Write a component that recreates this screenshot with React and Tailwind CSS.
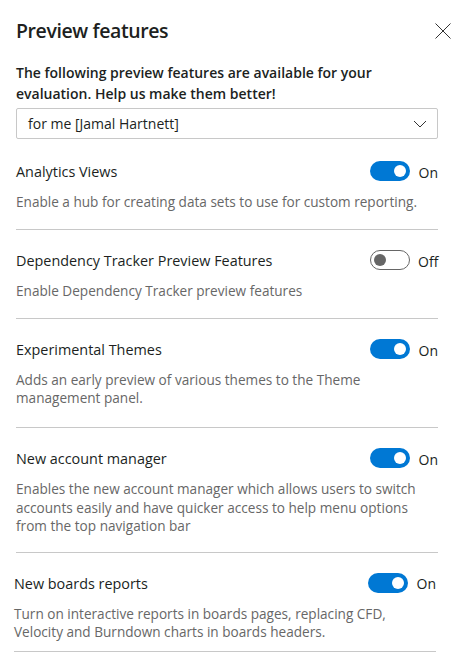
import React from "react";

const features = [
  { title: "Analytics Views", desc: "Enable a hub for creating data sets to use for custom reporting.", on: true, pb: "pb-[18px]", lh: "leading-[18px]" },
  { title: "Dependency Tracker Preview Features", desc: "Enable Dependency Tracker preview features", on: false, pb: "pb-[18px]", lh: "leading-[18px]" },
  { title: "Experimental Themes", desc: "Adds an early preview of various themes to the Theme management panel.", on: true, pb: "pb-[20px]", lh: "leading-[18px]" },
  { title: "New account manager", desc: "Enables the new account manager which allows users to switch accounts easily and have quicker access to help menu options from the top navigation bar", on: true, pb: "pb-[16px]", lh: "leading-[18.5px]" },
];

function Toggle({ on }) {
  return (
    <div className="flex items-center gap-[8px]">
      {on ? (
        <div className="w-[40px] h-[20px] rounded-full bg-[#0078d4] flex items-center justify-end px-[4px] -mt-[2px]">
          <div className="w-[12px] h-[12px] rounded-full bg-white" />
        </div>
      ) : (
        <div className="w-[40px] h-[20px] rounded-full border border-[#666] flex items-center justify-start px-[3px] -mt-[2px]">
          <div className="w-[12px] h-[12px] rounded-full bg-[#666]" />
        </div>
      )}
      <span className="text-[14px] text-[#201f1e] w-[20px] text-right">{on ? "On" : "Off"}</span>
    </div>
  );
}

function Feature({ f, shift }) {
  return (
    <div className={`border-b border-[#c8c8c8] pt-[21px] ${f.pb} ${shift ? "-ml-[2px] mr-[2px]" : ""}`}>
      <div className="flex items-center justify-between h-[20px]">
        <span className="text-[14.4px] text-[#201f1e]">{f.title}</span>
        <Toggle on={f.on} />
      </div>
      <p className={`mt-[11px] text-[13.6px] ${f.lh} text-[#676767] pr-[14px]`}>{f.desc}</p>
    </div>
  );
}

export default function App() {
  return (
    <div className="w-[458px] h-[657px] bg-white overflow-hidden" style={{ fontFamily: '"Segoe UI", "Open Sans", "Noto Sans", sans-serif' }}>
      <div className="px-[16px]">
        <div className="flex items-center justify-between pt-[16px] h-[46px]">
          <h1 className="text-[19.5px] tracking-[-0.4px] font-semibold text-[#201f1e] leading-[28px]">Preview features</h1>
          <svg width="16" height="16" viewBox="0 0 16 16" className="mr-[-9px] mt-[-1px]">
            <path d="M0.5 0.5 L15.5 15.5 M15.5 0.5 L0.5 15.5" stroke="#333" strokeWidth="1" fill="none" />
          </svg>
        </div>
        <div className="mr-[4px]">
          <p className="mt-[16px] text-[14px] leading-[21px] font-semibold text-[#201f1e] pr-[40px]">
            The following preview features are available for your evaluation. Help us make them better!
          </p>
          <div className="mt-[4px] h-[31px] border border-[#c8c8c8] rounded-[2px] flex items-center justify-between pl-[11px] pr-[10px]">
            <span className="text-[14px] text-[#201f1e]">for me [Jamal Hartnett]</span>
            <svg width="14" height="8" viewBox="0 0 14 8">
              <path d="M1 1 L7 7 L13 1" stroke="#333" strokeWidth="1" fill="none" />
            </svg>
          </div>
          <div className="mt-[2px]">
            {features.map((f) => (
              <Feature key={f.title} f={f} />
            ))}
            <Feature
              shift
              f={{ title: "New boards reports", desc: "Turn on interactive reports in boards pages, replacing CFD, Velocity and Burndown charts in boards headers.", on: true, pb: "pb-[10px]", lh: "leading-[18px]" }}
            />
          </div>
        </div>
      </div>
    </div>
  );
}
